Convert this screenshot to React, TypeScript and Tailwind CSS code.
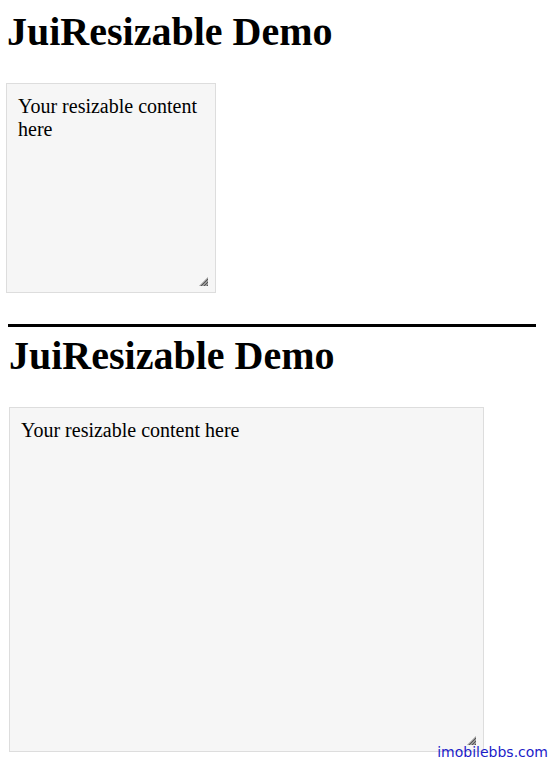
import React from "react";

function Handle() {
  return (
    <svg
      className="absolute right-[7px] bottom-[6px]"
      width="9"
      height="9"
      viewBox="0 0 9 9"
    >
      <path d="M9 0 L9 9 L0 9 Z" fill="#9a9a9a" />
      <path d="M9 2 L2 9 M9 5 L5 9 M9 8 L8 9" stroke="#555" strokeWidth="1" />
    </svg>
  );
}

function Box({ className }: { className: string }) {
  return (
    <div
      className={`relative border border-[#dddddd] bg-[#f6f6f6] px-[11px] pt-[11px] pb-[9px] text-[20px] leading-[23px] text-black ${className}`}
    >
      Your resizable content here
      <Handle />
    </div>
  );
}

export default function App() {
  return (
    <div className="relative min-h-[763px] bg-white font-['Liberation_Serif',serif] text-black">
      <div className="pl-[6px] pt-[9px]">
        <h1 className="ml-[1px] text-[40px] font-bold leading-[46px]">JuiResizable Demo</h1>
        <Box className="mt-[28px] h-[210px] w-[210px]" />
      </div>
      <div className="ml-[8px] mt-[31px] h-[3px] w-[528px] bg-black" />
      <div className="pl-[9px] pt-[6px]">
        <h1 className="text-[40px] font-bold leading-[46px]">JuiResizable Demo</h1>
        <Box className="mt-[28px] h-[345px] w-[475px]" />
      </div>
      <div className="absolute right-[5px] top-[743px] font-['DejaVu_Sans',sans-serif] text-[14px] leading-[18px] text-[#1c1cc8]">
        imobilebbs.com
      </div>
    </div>
  );
}
